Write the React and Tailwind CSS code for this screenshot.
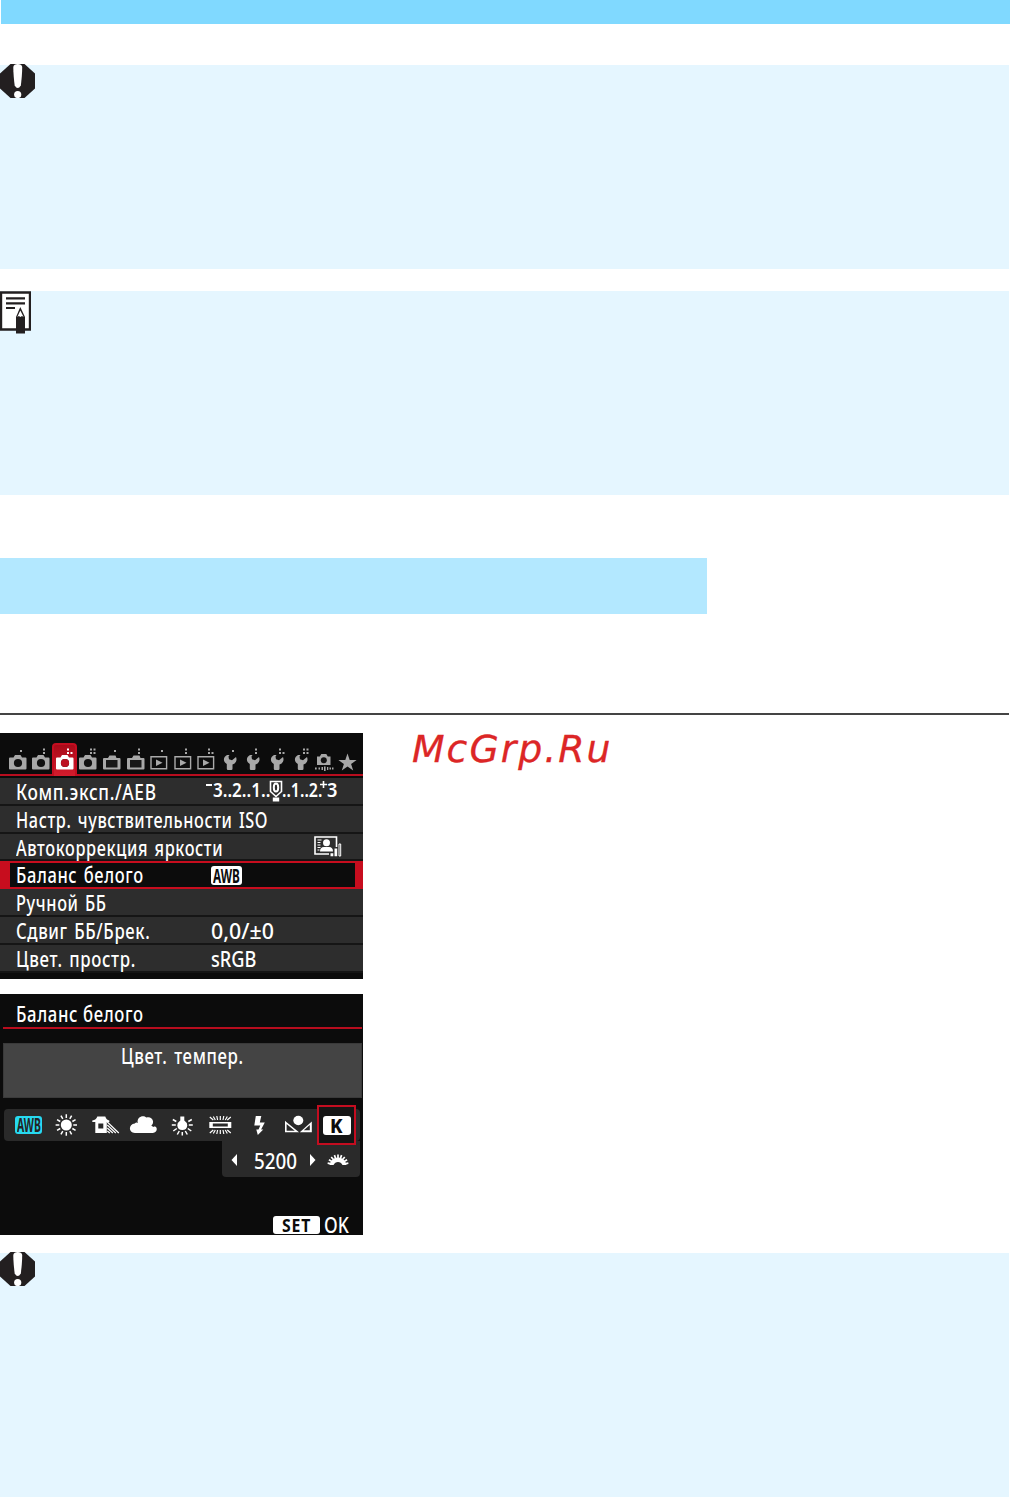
import React, { useLayoutEffect, useRef, useState } from 'react';

// Text squeezed to a given width, like the condensed camera font
const Fit = ({ w, children, className = '' }) => {
  const ref = useRef(null);
  const [scale, setScale] = useState(1);
  useLayoutEffect(() => {
    setScale(w / ref.current.offsetWidth);
  }, [w, children]);
  return (
    <span className={`block shrink-0 whitespace-nowrap ${className}`} style={{ width: w }}>
      <span ref={ref} className="inline-block origin-left" style={{ transform: `scaleX(${scale})` }}>
        {children}
      </span>
    </span>
  );
};

const WarningIcon = () => (
  <svg className="block h-[34px] w-[35px] -translate-y-px" viewBox="0 0 35 34">
    <path d="M10.500 0h14L35 9.500v15L24.500 34h-14L0 24.500V9.500z" fill="#231f20" />
    <path d="M13.300 3C13.300-1 22.200-1 22.200 3C22.200 10 21.500 16 20.800 21.500Q17.700 26.500 14.700 21.500C14 16 13.300 10 13.300 3z" fill="#fff" />
    <circle cx="17.700" cy="30.500" r="3.600" fill="#fff" />
  </svg>
);

const NoteIcon = () => (
  <svg className="block h-[43px] w-[31px]" viewBox="0 0 31 43">
    <path d="M1 1.500h29v37H1z" fill="#fff" stroke="#231f20" strokeWidth="2.400" />
    <path d="M6 7.300h19M6 12.300h19M6 17h9" stroke="#231f20" strokeWidth="2.200" />
    <path d="M16 26l4.300-10L25 26v16.500h-9z" fill="#231f20" />
    <path d="M17.300 26l3-6.500 3.300 6.500-1.600-1-1.600 1-1.500-1z" fill="#fff" />
  </svg>
);

const dotSets = {
  1: [[15, 5]],
  2: [[15, 3.500], [15, 7]],
  3: [[15, 3.500], [15, 7], [18.500, 7]],
  4: [[15, 3.500], [15, 7], [18.500, 3.500], [18.500, 7]],
};

const shapes = {
  camera: (
    <>
      <path d="M4 11.500h3.500l1.500-2.500h5.500l1.500 2.500h3.500q1 0 1 1v10q0 1-1 1h-15.500q-1 0-1-1v-10q0-1 1-1z" />
      <circle cx="12" cy="17" r="4.100" className="fill-[#111]" />
    </>
  ),
  live: (
    <>
      <path d="M4 12h4l1.500-2.500h6l1 2.500h3q1 0 1 1v9.500q0 1-1 1h-15.500q-1 0-1-1v-9.500q0-1 1-1z" />
      <path d="M6 14h11.500v7.500h-11.500z" className="fill-[#181818]" />
    </>
  ),
  play: (
    <>
      <path d="M4 10.700h15.600v12H4z" fill="none" stroke="#aaa" strokeWidth="1.400" />
      <path d="M9 13.500l6.500 3.200L9 20z" />
    </>
  ),
  wrench: (
    <path d="M9 9C5 11 4.800 15.500 8.800 18v4.800q0 1.200 1.200 1.200h3.300q1.200 0 1.200-1.200v-4.300C18.500 17 19.200 14 18 11l-4 3.300-3-1-.5-2.800 1-1.500z" />
  ),
  custom: (
    <>
      <path d="M5 10.500h2.800l1.500-2.500h5l1.500 2.500h2.700v8.500h-13.500z" />
      <circle cx="11.800" cy="14.300" r="3" className="fill-[#111]" />
      <path d="M3 21.500h1.700v2H3zM6.500 21.500h1.500v2H6.500zM9.500 21h1.500v3H9.500zM12 20.500h1.600v4.500H12zM15 21h1.300v3H15zM17.500 21.500h1.500v2h-1.500zM20 21.500h1.500v2H20z" />
    </>
  ),
  star: <path d="M11.500 7.500l2.200 6.500h6.900l-5.500 4.100 2.100 6.400-5.700-4-5.700 4 2.100-6.400-5.500-4.100h6.900z" />,
};

const tabs = [
  ['camera', 1], ['camera', 2], ['camera', 3], ['camera', 4],
  ['live', 1], ['live', 2],
  ['play', 1], ['play', 2], ['play', 3],
  ['wrench', 1], ['wrench', 2], ['wrench', 3], ['wrench', 4],
  ['custom', 0], ['star', 0],
];

const Tab = ({ kind, dots, active }) => (
  <div
    className={
      active
        ? '-mx-[0.7px] -mb-0.5 flex h-[33px] w-[25px] shrink-0 items-end rounded-t border-x-2 border-t-2 border-[#c40d20] bg-linear-to-b from-[#a90a19] to-[#d31c2d] pb-[3px]'
        : 'flex h-[31px] w-[23.6px] shrink-0 items-end pb-px'
    }
  >
    <svg
      className={`h-[27px] w-6 shrink-0 overflow-visible ${active ? '-ml-[1.3px] fill-white' : 'fill-[#a8a8a8]'}`}
      viewBox="0 0 24 27"
    >
      {shapes[kind]}
      {active && <circle cx="12" cy="17" r="4.100" fill="#bd1021" />}
      {(dotSets[dots] || []).map(([x, y]) => (
        <rect key={`${x}-${y}`} x={x - 1} y={y - 1} width="2" height="2" />
      ))}
    </svg>
  </div>
);

const AebScale = () => (
  <div className="flex h-full items-center text-[20px] font-semibold">
    <span className="mb-3 mr-px h-0.5 w-1.5 bg-white" />
    <Fit w={57} className="-mt-0.5">3..2..1..</Fit>
    <svg className="h-[24px] w-[12px] shrink-0 overflow-visible" viewBox="0 0 12 24">
      <path d="M.5 2.500h11v10l-5.500 5L.5 12.500z" fill="none" stroke="#fff" strokeWidth="1.600" />
      <ellipse cx="6" cy="8.500" rx="2.200" ry="4" fill="none" stroke="#fff" strokeWidth="2" />
      <path d="M2.800 18.500h6.400v4h-6.400z" fill="#fff" />
    </svg>
    <Fit w={40} className="-mt-0.5">..1..2.</Fit>
    <svg className="-ml-0.5 mb-3 h-[7px] w-[7px]" viewBox="0 0 7 7">
      <path d="M3.500 0v7M0 3.500h7" stroke="#fff" strokeWidth="1.600" />
    </svg>
    <Fit w={10} className="-mt-0.5">3</Fit>
  </div>
);

const LightingIcon = () => (
  <svg className="ml-[103px] h-[21px] w-[28px] shrink-0" viewBox="0 0 28 21">
    <path d="M1 1h21.500v17H1z" fill="none" stroke="#fff" strokeWidth="1.600" />
    <path d="M3.500 4h4M3.500 6.500h3M3.500 9h3M3.500 11.500h3M3.500 14h2" stroke="#fff" />
    <circle cx="12.500" cy="6.800" r="3.500" fill="#fff" />
    <path d="M6 15.500q0-4.500 4-4.500h5q4 0 4 4.500z" fill="#fff" />
    <path d="M15 16h13v5H15zM20 11h8v8h-8zM24 6h4v8h-4z" fill="#2d2d2d" />
    <path d="M16.500 17.300h2.800v3h-2.800zM20.500 12.500h2.700v7.800h-2.700z" fill="#fff" />
    <path d="M25 8h1.700v12H25z" fill="none" stroke="#fff" />
  </svg>
);

const Awb = ({ cyan }) => (
  <span
    className={`flex shrink-0 items-center justify-center rounded-[3px] text-[20px] font-bold ${
      cyan ? 'h-[18px] w-[27px] bg-[#27d9f0] leading-[18px] text-[#242424]' : 'h-[19px] w-[31px] bg-white leading-[19px] text-[#0c0c0c]'
    }`}
  >
    <Fit w={cyan ? 24 : 27}>AWB</Fit>
  </span>
);

const rows = [
  { label: 'Комп.эксп./AEB', w: 141, value: <AebScale />, shift: '-ml-[5px]' },
  { label: 'Настр. чувствительности ISO', w: 252 },
  { label: 'Автокоррекция яркости', w: 207, value: <LightingIcon /> },
  { label: 'Баланс белого', w: 128, value: <Awb />, active: true },
  { label: 'Ручной ББ', w: 91 },
  { label: 'Сдвиг ББ/Брек.', w: 134, value: <Fit w={63} className="mt-[3px]">0,0/±0</Fit> },
  { label: 'Цвет. простр.', w: 120, value: <Fit w={45} className="mt-[3px]">sRGB</Fit> },
];

const MenuRow = ({ row }) => (
  <div
    className={`flex h-[27.8px] items-center ${
      row.active
        ? 'border-y-2 border-l-[10px] border-r-[8px] border-[#c70d1e] bg-[#0c0c0c] pl-[6px]'
        : 'border-b-2 border-[#151515] bg-[#2d2d2d] pl-4'
    }`}
  >
    <div className={`flex w-[195px] shrink-0 tracking-[0.8px] [word-spacing:2px] ${row.active ? '' : 'pt-[3px]'}`}>
      <Fit w={row.w}>{row.label}</Fit>
    </div>
    <div className={`flex h-full items-center ${row.shift || ''}`}>{row.value}</div>
  </div>
);

const CameraMenu = () => (
  <div className="h-[246px] overflow-hidden bg-[#0c0c0c]">
    <div className="flex h-[43px] items-end border-b-2 border-[#b80d1e] pl-[5.5px]">
      {tabs.map(([kind, dots], i) => (
        <Tab key={i} kind={kind} dots={dots} active={i === 2} />
      ))}
    </div>
    <div className="mt-[2px]">
      {rows.map((row) => (
        <MenuRow key={row.label} row={row} />
      ))}
    </div>
  </div>
);

const rays = (n, r1, r2, start = 0, span = 360) =>
  Array.from({ length: n }, (_, i) => {
    const a = ((start + (span * i) / n) * Math.PI) / 180;
    return `M${Math.cos(a) * r1} ${Math.sin(a) * r1}L${Math.cos(a) * r2} ${Math.sin(a) * r2}`;
  }).join('');

const wbIcons = [
  // daylight
  <>
    <circle r="5.500" />
    <path d={rays(12, 7, 10.700)} stroke="#fff" strokeWidth="1.500" />
  </>,
  // shade
  <>
    <path d="M-13-4.500Q-9-5-8-8.500H0Q1-5 4-4.500V-3H1.500V8H-10V-3h-3z" />
    <path d="M-7-1.500h5v5h-5z" fill="#2a2a2a" />
    <path d="M2-3L13.500 8M2 0l8.500 8M2 3l5.500 5M2 6l2.500 2" stroke="#fff" strokeWidth="1.200" />
  </>,
  // cloudy
  <path d="M-8.500 8C-15 8-15-1-8.500-1.500-7-3-6.500-2.500-5.500-2-7-8 0-10.500 3-7.500 9-9.500 12-2.500 8 .5L10 2C14-.5 15.500 7.500 9.500 8z" />,
  // tungsten
  <>
    <path d="M-2-8.500H2v4Q5-2.500 5 .5 4.500 5 0 5-4.500 5-5 .5-5-2.500-2-4.500z" />
    <path d="M-6.500 0h-4M6.500 0h4M-6-3.500l-3.500-2M6-3.500l3.500-2M-5.500 3.500l-3.500 2.500M5.500 3.500l3.500 2.500M-3 6l-2 3.500M3 6l2 3.500M0 7v3.500" stroke="#fff" strokeWidth="1.500" />
  </>,
  // fluorescent
  <>
    <path d="M-11-3H11V3H-11z" />
    <path d="M-7.500-1.500H7.500V1.500H-7.500z" fill="#2a2a2a" />
    <path d="M0-9v4M-3.500-9l.8 4M3.500-9l-.8 4M-7-8.500l2 3.500M7-8.500L5-5M-10.500-8l3.500 3M10.500-8L7-5M0 9V5M-3.500 9l.8-4M3.500 9l-.8-4M-7 8.500L-5 5M7 8.500L5 5M-10.500 8l3.500-3M10.500 8L7 5" stroke="#fff" strokeWidth="1.200" />
  </>,
  // flash
  <path d="M-3.500-9H2L.5-2.500H5.500L1.800 4.500H4L-1.500 10-3 4.500H-.8L1 .5H-5z" />,
  // custom
  <>
    <ellipse cy="-4.500" rx="5" ry="4.700" />
    <path d="M-12.500-2.500L-1.500 6.500h-11z" fill="none" stroke="#fff" strokeWidth="1.600" />
    <path d="M13.500-3.500v10.800h-12z" />
    <path d="M11.500 0v5.300h-6z" fill="#2a2a2a" />
  </>,
];

const WhiteBalance = () => (
  <div className="h-[241px] bg-[#0c0c0c]">
    <div className="ml-[3px] mr-px flex h-[33px] items-end pl-[13px] tracking-[0.8px]">
      <Fit w={128} className="-mb-px">Баланс белого</Fit>
    </div>
    <div className="ml-[3px] mr-px h-[1.5px] bg-[#b80d1e]" />
    <div className="ml-[3px] mr-px mt-[14.5px] flex h-[55px] justify-center border border-[#3a3a3a] bg-[#444] tracking-[0.8px] [word-spacing:2px]">
      <Fit w={123} className="-mt-px">Цвет. темпер.</Fit>
    </div>
    <div className="ml-1 mr-[3px] mt-[11px] flex h-8 items-center rounded bg-[#2a2a2a] pl-[11px]">
      <Awb cyan />
      <div className="ml-[5px] flex">
        {wbIcons.map((icon, i) => (
          <svg key={i} className="h-6 w-[38.6px] shrink-0 fill-white" viewBox="-19.300 -12 38.600 24">
            {icon}
          </svg>
        ))}
      </div>
      <div className="relative z-10 flex h-10 w-[39px] shrink-0 items-center justify-center border-2 border-[#c40d20] bg-[#151515]">
        <span className="flex h-[19px] w-7 items-center justify-center rounded-[3px] bg-white text-[20px] font-extrabold leading-[19px] text-[#0c0c0c]">
          <Fit w={13}>K</Fit>
        </span>
      </div>
    </div>
    <div className="ml-[222px] mr-[3px] flex h-9 items-center rounded-b bg-[#2a2a2a] pl-[9px] pt-0.5">
      <svg className="h-3 w-[6px] fill-white" viewBox="0 0 6 12">
        <path d="M6 0v12L.5 6z" />
      </svg>
      <Fit w={43} className="ml-[17px] mt-0.5">5200</Fit>
      <svg className="ml-[13px] h-3 w-[6px] fill-white" viewBox="0 0 6 12">
        <path d="M0 0v12l5.500-6z" />
      </svg>
      <svg className="ml-3 h-3 w-5 overflow-visible" viewBox="-10 -11 20 12">
        <path d="M-8.500 0Q-6.500-7.500 0-7.500T8.500 0H4.500Q3-3 0-3T-4.500 0z" fill="#fff" />
        <path d={rays(9, 5.500, 10.500, 190, 180)} stroke="#fff" strokeWidth="1.700" />
      </svg>
    </div>
    <div className="mt-[39px] flex h-[18px] items-center pl-[273px]">
      <span className="flex h-[18px] w-[47px] items-center justify-center rounded-[3px] bg-white text-[18px] font-bold leading-[18px] text-[#0c0c0c]">
        <Fit w={29} className="tracking-[1px]">SET</Fit>
      </span>
      <Fit w={25} className="ml-1 leading-[18px]">OK</Fit>
    </div>
  </div>
);

export default function App() {
  return (
    <div className="h-[1497px] w-[1010px] overflow-hidden bg-white">
      <div className="ml-px h-6 bg-[#80d9ff]" />
      <div className="mr-px mt-[41px] h-[204px] bg-[#e5f6ff]">
        <WarningIcon />
      </div>
      <div className="mr-px mt-[22px] h-[204px] bg-[#e5f6ff]">
        <NoteIcon />
      </div>
      <div className="mt-[63px] h-14 w-[707px] bg-[#b3e8ff]" />
      <div className="mr-px mt-[99px] h-0.5 bg-[#444]" />
      <div className="mt-[18px] flex">
        <div className="flex w-[363px] flex-col gap-[15px] font-['Noto_Sans',sans-serif] text-[21px] font-medium leading-[27px] text-white">
          <CameraMenu />
          <WhiteBalance />
        </div>
        <div className="-mt-[3px] ml-[49px] font-['DejaVu_Sans',sans-serif] text-[38px] italic leading-none text-[#dc2626] [-webkit-text-stroke:0.3px_#dc2626]">
          <Fit w={200}>
            <span className="tracking-[2px]">McGrp.Ru</span>
          </Fit>
        </div>
      </div>
      <div className="mr-px mt-[18px] h-[244px] bg-[#e5f6ff]">
        <WarningIcon />
      </div>
    </div>
  );
}
